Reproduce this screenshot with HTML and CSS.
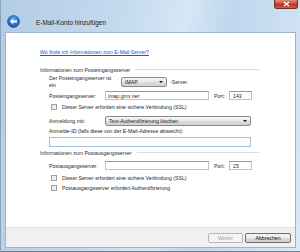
FILE: index.html
```html
<!DOCTYPE html>
<html lang="de">
    <head>
        <meta charset="UTF-8">
        <title>E-Mail-Konto hinzufügen</title>
        <link rel="stylesheet" href="styles.css">
    </head>
    <body>
        <div class="window">
            <div class="titlebar">
                <span class="back">
                    <svg width="13" height="13" viewBox="0 0 13 13">
                        <defs>
                            <radialGradient id="bg" cx="50%" cy="35%" r="65%">
                                <stop offset="0" stop-color="#6fb4f2"/>
                                <stop offset="0.6" stop-color="#2a78cc"/>
                                <stop offset="1" stop-color="#17509a"/>
                            </radialGradient>
                        </defs>
                        <circle cx="6.5" cy="6.5" r="6" fill="url(#bg)" stroke="#1b4f8c" stroke-width="0.6"/>
                        <path d="M3 6.5 L6 3.8 L6 5.4 L10 5.4 L10 7.6 L6 7.6 L6 9.2 Z" fill="#fff"/>
                    </svg>
                </span>
                <span class="title">E-Mail-Konto hinzufügen</span>
                <span class="close">
                    <svg width="7" height="6" viewBox="0 0 7 6">
                        <path d="M1 1 L6 5 M6 1 L1 5" stroke="#fff" stroke-width="1.4"/>
                    </svg>
                </span>
            </div>
            <div class="client">
                <div class="content">
                    <a class="help" href="#">Wo finde ich Informationen zum E-Mail-Server?</a>

                    <div class="group-head first"><span>Informationen zum Posteingangsserver</span></div>
                    <div class="row row-type">
                        <span class="label wide">Der Posteingangsserver ist<br>ein</span>
                        <span class="combo short">IMAP</span>
                        <span class="suffix">-Server.</span>
                    </div>
                    <div class="row row-server">
                        <span class="label">Posteingangsserver:</span>
                        <span class="field host">imap.gmx.net</span>
                        <span class="port-label">Port:</span>
                        <span class="field port">143</span>
                    </div>
                    <div class="row row-check">
                        <span class="box"></span>
                        <span>Dieser Server erfordert eine sichere Verbindung (SSL)</span>
                    </div>
                    <div class="row row-auth">
                        <span class="label">Anmeldung mit:</span>
                        <span class="combo long">Text-Authentifizierung löschen</span>
                    </div>
                    <div class="row row-note">
                        <span>Anmelde-ID (falls diese von der E-Mail-Adresse abweicht):</span>
                    </div>
                    <div class="row row-id">
                        <span class="field full"></span>
                    </div>

                    <div class="group-head second"><span>Informationen zum Postausgangsserver</span></div>
                    <div class="row row-out">
                        <span class="label">Postausgangsserver:</span>
                        <span class="field host"></span>
                        <span class="port-label">Port:</span>
                        <span class="field port">25</span>
                    </div>
                    <div class="row row-check2">
                        <span class="box"></span>
                        <span>Dieser Server erfordert eine sichere Verbindung (SSL)</span>
                    </div>
                    <div class="row row-check3">
                        <span class="box"></span>
                        <span>Postausgangsserver erfordert Authentifizierung</span>
                    </div>
                </div>
                <div class="footer">
                    <span class="button disabled">Weiter</span>
                    <span class="button">Abbrechen</span>
                </div>
            </div>
            <div class="bottom-edge"></div>
        </div>
    </body>
</html>
```

FILE: styles.css
```css
html, body {
    margin: 0;
    padding: 0;
}

body {
    width: 300px;
    height: 252px;
    overflow: hidden;
    font-family: "Liberation Sans", Arial, sans-serif;
    font-size: 5.2px;
    color: #1f1f1f;
}

.window {
    display: flex;
    flex-direction: column;
    height: 252px;
    padding: 0 4px 0 4px;
    box-sizing: border-box;
    border-left: 1px solid #8aa2bb;
    background: linear-gradient(100deg, #b3cce6 0%, #c4d9ee 35%, #d6e7f6 55%, #bfd6ed 68%, #d9e9f7 100%);
}

.titlebar {
    display: flex;
    align-items: flex-start;
    height: 32px;
    margin-left: -1px;
}

.back {
    display: flex;
    margin-top: 15px;
    margin-left: 3px;
}

.title {
    margin-top: 19px;
    margin-left: 16px;
    font-size: 6.4px;
    color: #1a1a1a;
}

.close {
    display: flex;
    align-items: center;
    justify-content: center;
    margin-left: auto;
    margin-right: -2px;
    width: 24px;
    height: 9px;
    box-sizing: border-box;
    border: 1px solid #6e2b22;
    border-top: none;
    border-radius: 0 0 3px 3px;
    background: linear-gradient(#e08a7a, #c9503c 45%, #b2321f 55%, #d0614b);
}

.client {
    display: flex;
    flex-direction: column;
    height: 215px;
    border: 1px solid #9fb3c8;
    background: #fff;
}

.content {
    flex: 1;
    padding: 15px 36px 0 34px;
}

.help {
    display: block;
    height: 8px;
    line-height: 8px;
    color: #0066cc;
}

.group-head {
    display: flex;
    align-items: center;
    height: 8px;
    color: #2b2b2b;
}

.group-head::after {
    content: "";
    flex: 1;
    margin-left: 5px;
    border-top: 1px solid #d6dde4;
}

.group-head.first {
    margin-top: 10px;
}

.group-head.second {
    margin-top: 2px;
}

.row {
    display: flex;
    align-items: center;
    margin-left: 9px;
}

.label {
    width: 56px;
    flex-shrink: 0;
}

.label.wide {
    width: 72px;
    line-height: 7px;
}

.row-type {
    height: 16px;
}

.row-server {
    height: 10px;
    margin-top: 1px;
}

.row-check {
    height: 8px;
    margin-top: 2px;
}

.row-auth {
    height: 10px;
    margin-top: 5px;
}

.row-note {
    height: 8px;
    margin-top: 1px;
}

.row-id {
    height: 10px;
    margin-top: 2px;
}

.row-out {
    height: 10px;
    margin-top: 4px;
}

.row-check2 {
    height: 8px;
    margin-top: 3px;
}

.row-check3 {
    height: 8px;
    margin-top: 2px;
}

.field {
    display: flex;
    align-items: center;
    height: 9px;
    box-sizing: border-box;
    padding-left: 2px;
    border: 1px solid #b7c3d0;
    border-top-color: #8e9aa8;
    background: #fff;
}

.field.host {
    width: 104px;
}

.field.port {
    width: 23px;
    padding-left: 3px;
}

.field.full {
    width: 202px;
    height: 10px;
    border-color: #a9c0d8;
}

.port-label {
    margin-left: 5px;
    width: 15px;
}

.combo {
    position: relative;
    display: flex;
    align-items: center;
    height: 10px;
    box-sizing: border-box;
    padding-left: 3px;
    border: 1px solid #8a8a8a;
    border-radius: 2px;
    background: linear-gradient(#f6f6f6, #e9e9e9 50%, #dcdcdc 51%, #d2d2d2);
}

.combo::after {
    content: "";
    position: absolute;
    right: 3px;
    top: 3px;
    border-left: 2px solid transparent;
    border-right: 2px solid transparent;
    border-top: 2px solid #111;
}

.combo.short {
    width: 46px;
}

.combo.long {
    width: 146px;
}

.suffix {
    margin-left: 3px;
}

.box {
    width: 6px;
    height: 6px;
    box-sizing: border-box;
    margin-left: 2px;
    margin-right: 5px;
    border: 1px solid #a0a0a0;
    background: linear-gradient(135deg, #e2e2e2, #f8f8f8);
}

.footer {
    display: flex;
    align-items: center;
    justify-content: flex-end;
    gap: 2px;
    height: 19px;
    padding-right: 4px;
    border-top: 1px solid #dfdfdf;
    background: #f0f0f0;
}

.button {
    display: flex;
    align-items: center;
    justify-content: center;
    height: 10px;
    box-sizing: border-box;
    border: 1px solid #707070;
    border-radius: 2px;
    background: linear-gradient(#f3f3f3, #ebebeb 50%, #dddddd 51%, #cfcfcf);
    color: #111;
    width: 46px;
}

.button.disabled {
    width: 35px;
    border-color: #b5b8bb;
    background: #f4f4f4;
    color: #a3a3a3;
}

.bottom-edge {
    height: 3px;
    margin: 0 -4px;
    border-bottom: 1px solid #6f8197;
}
```
